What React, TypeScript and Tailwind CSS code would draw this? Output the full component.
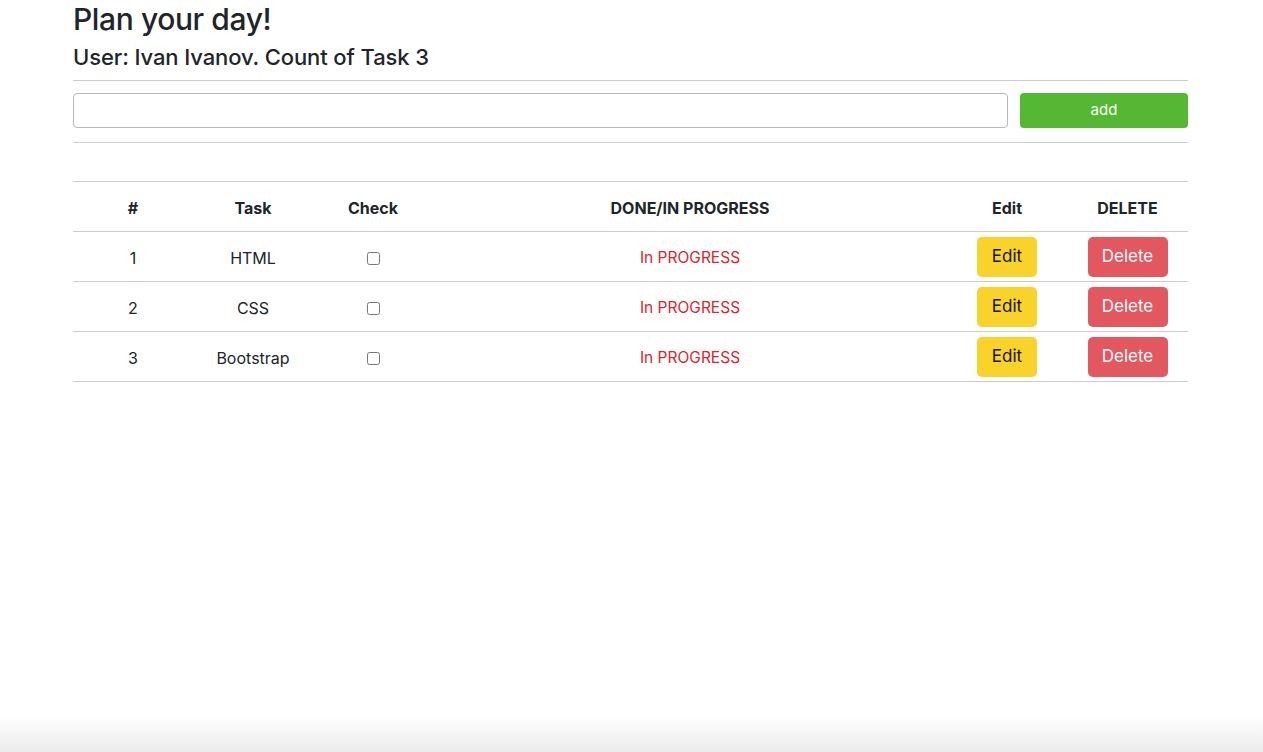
import { useState } from 'react'

interface Task {
  id: number
  title: string
  done: boolean
}

const initialTasks: Task[] = [
  { id: 1, title: 'HTML', done: false },
  { id: 2, title: 'CSS', done: false },
  { id: 3, title: 'Bootstrap', done: false },
]

export default function App() {
  const [tasks, setTasks] = useState<Task[]>(initialTasks)
  const [text, setText] = useState('')

  const toggle = (id: number) =>
    setTasks(tasks.map((t) => (t.id === id ? { ...t, done: !t.done } : t)))

  return (
    <div className="min-h-screen bg-white text-[#212529] font-['Inter','Liberation_Sans',sans-serif]">
      <div className="ml-[73px] w-[1115px]">
        <h2 className="text-[30px] leading-[38px] font-medium tracking-[-0.4px]">Plan your day!</h2>
        <h4 className="mt-[5px] text-[22px] leading-[29px] font-medium tracking-[-0.1px]">
          User: Ivan Ivanov. Count of Task {tasks.length}
        </h4>
        <hr className="mt-[8px] border-t border-[#cccccc]" />

        <div className="mt-[12px] flex gap-[12px]">
          <input
            value={text}
            onChange={(e) => setText(e.target.value)}
            className="flex-1 h-[35px] rounded-[4px] border border-[#b8b8b8] px-3 outline-none"
          />
          <button className="w-[168px] h-[35px] rounded-[4px] bg-[#54b833] text-white text-[15px]">
            add
          </button>
        </div>
        <hr className="mt-[14px] border-t border-[#cccccc]" />

        <table className="mt-[38px] w-full table-fixed border-collapse text-center">
          <colgroup>
            <col className="w-[120px]" />
            <col className="w-[120px]" />
            <col className="w-[120px]" />
            <col />
            <col className="w-[120px]" />
            <col className="w-[121px]" />
          </colgroup>
          <thead>
            <tr className="h-[50px] border-y border-[#cccccc] text-[16px] font-bold">
              <th className="pt-[3px]">#</th>
              <th className="pt-[3px]">Task</th>
              <th className="pt-[3px]">Check</th>
              <th className="pt-[3px]">DONE/IN PROGRESS</th>
              <th className="pt-[3px]">Edit</th>
              <th className="pt-[3px]">DELETE</th>
            </tr>
          </thead>
          <tbody className="text-[16px]">
            {tasks.map((t) => (
              <tr key={t.id} className="h-[50px] border-b border-[#cccccc]">
                <td className="pt-[3px]">{t.id}</td>
                <td className="pt-[3px]">{t.title}</td>
                <td>
                  <input
                    type="checkbox"
                    checked={t.done}
                    onChange={() => toggle(t.id)}
                    className="w-[13px] h-[13px] align-middle"
                  />
                </td>
                <td
                  className={
                    t.done
                      ? 'pt-[3px] text-[15.5px] text-[#1f9d3a]'
                      : 'pt-[3px] text-[15.5px] text-[#e0242a]'
                  }
                >
                  {t.done ? 'DONE' : 'In PROGRESS'}
                </td>
                <td>
                  <button className="w-[60px] h-[40px] rounded-[5px] bg-[#f9d22a] text-[#111] text-[17px]">
                    Edit
                  </button>
                </td>
                <td>
                  <button
                    onClick={() => setTasks(tasks.filter((x) => x.id !== t.id))}
                    className="w-[80px] h-[40px] rounded-[5px] bg-[#e3575f] text-white text-[17px]"
                  >
                    Delete
                  </button>
                </td>
              </tr>
            ))}
          </tbody>
        </table>
      </div>
      <div className="pointer-events-none fixed bottom-0 left-0 right-0 h-[36px] bg-gradient-to-b from-white/0 to-[#ebebeb]" />
    </div>
  )
}
